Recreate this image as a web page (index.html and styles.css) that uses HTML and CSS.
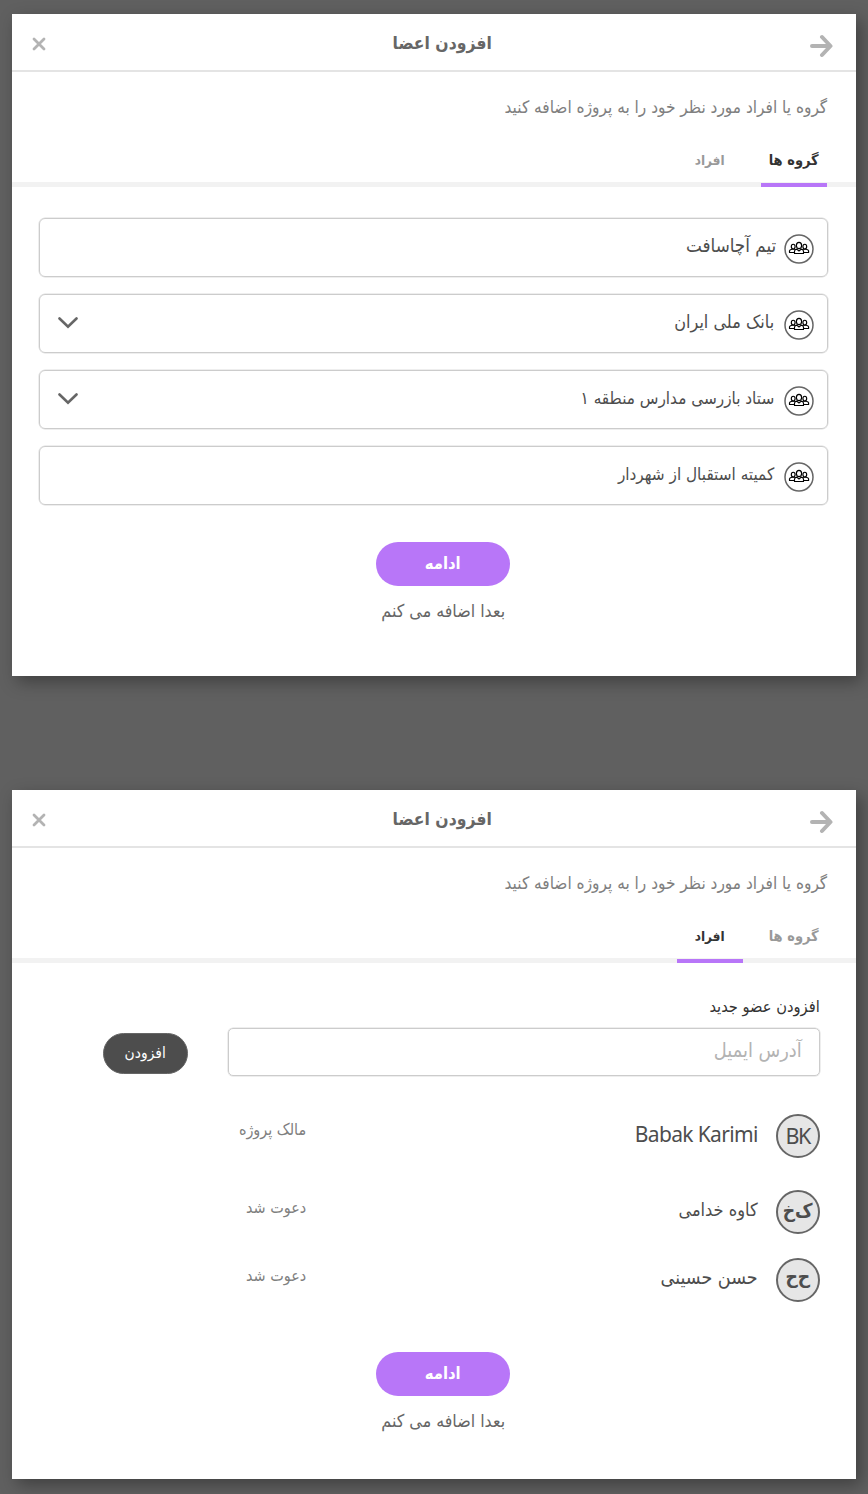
FILE: index.html
```html
<!DOCTYPE html>
<html lang="fa" dir="rtl">
<head>
<meta charset="utf-8">
<title>افزودن اعضا</title>
<link rel="stylesheet" href="styles.css">
</head>
<body>
<svg class="defs" width="0" height="0">
  <symbol id="arrow" viewBox="0 0 24 24"><path d="M3 12H20.500M13 3L21.500 12L13 21" fill="none" stroke="currentColor" stroke-width="4" stroke-linecap="round" stroke-linejoin="round"/></symbol>
  <symbol id="close" viewBox="0 0 14 14"><path d="M2 2l10 10M12 2L2 12" fill="none" stroke="currentColor" stroke-width="2.800" stroke-linecap="round"/></symbol>
  <symbol id="chevron" viewBox="0 0 20 12"><path d="M1.500 1.500L10 9.800l8.500-8.300" fill="none" stroke="currentColor" stroke-width="2.600" stroke-linecap="round"/></symbol>
  <symbol id="group" viewBox="0 0 30 30">
    <circle cx="15" cy="15" r="14" fill="#fff" stroke="#666" stroke-width="1.500"/>
    <g fill="#fff" stroke="#000" stroke-width="1.150" stroke-linejoin="round">
      <path d="M5.500 18.500v-1.700q.2-1.100 2.400-1.600h2.700q2 .5 2.300 1.600v1.700z"/>
      <path d="M17.100 18.500v-1.700q.3-1.100 2.400-1.600h2.700q2.200.5 2.400 1.600v1.700z"/>
      <ellipse cx="9.200" cy="12.600" rx="1.900" ry="2.400"/>
      <ellipse cx="20.800" cy="12.600" rx="1.900" ry="2.400"/>
      <path d="M10.500 19.500v-2.500q.2-1.300 2.200-1.900l2.300 1.900 2.300-1.900q2 .6 2.200 1.900v2.500z"/>
      <ellipse cx="15" cy="11.500" rx="2.600" ry="3.100"/>
    </g>
  </symbol>
</svg>

<section class="panel groups">
  <header class="head">
    <svg class="arrow"><use href="#arrow"/></svg>
    <h1 class="title">افزودن اعضا</h1>
    <svg class="close"><use href="#close"/></svg>
  </header>
  <p class="intro">گروه یا افراد مورد نظر خود را به پروژه اضافه کنید</p>
  <nav class="tabs">
    <a class="tab wide active"><span>گروه ها</span></a>
    <a class="tab"><span>افراد</span></a>
  </nav>
  <ul class="list">
    <li class="row first"><svg class="badge"><use href="#group"/></svg><span class="name large">تیم آچاسافت</span></li>
    <li class="row"><svg class="badge"><use href="#group"/></svg><span class="name medium">بانک ملی ایران</span><svg class="chevron"><use href="#chevron"/></svg></li>
    <li class="row"><svg class="badge"><use href="#group"/></svg><span class="name">ستاد بازرسی مدارس منطقه ۱</span><svg class="chevron"><use href="#chevron"/></svg></li>
    <li class="row"><svg class="badge"><use href="#group"/></svg><span class="name">کمیته استقبال از شهردار</span></li>
  </ul>
  <footer class="foot">
    <button class="next">ادامه</button>
    <a class="later">بعدا اضافه می کنم</a>
  </footer>
</section>

<section class="panel people">
  <header class="head">
    <svg class="arrow"><use href="#arrow"/></svg>
    <h1 class="title">افزودن اعضا</h1>
    <svg class="close"><use href="#close"/></svg>
  </header>
  <p class="intro">گروه یا افراد مورد نظر خود را به پروژه اضافه کنید</p>
  <nav class="tabs">
    <a class="tab wide"><span>گروه ها</span></a>
    <a class="tab active"><span>افراد</span></a>
  </nav>
  <div class="invite">
    <label class="label">افزودن عضو جدید</label>
    <div class="controls">
      <div class="field"><span>آدرس ایمیل</span></div>
      <button class="add">افزودن</button>
    </div>
  </div>
  <ul class="members">
    <li class="member owner"><span class="avatar latin">BK</span><span class="who latin" dir="ltr">Babak Karimi</span><span class="role">مالک پروژه</span></li>
    <li class="member"><span class="avatar">ک‌خ</span><span class="who">کاوه خدامی</span><span class="role">دعوت شد</span></li>
    <li class="member"><span class="avatar raised">ح‌ح</span><span class="who large">حسن حسینی</span><span class="role">دعوت شد</span></li>
  </ul>
  <footer class="foot">
    <button class="next">ادامه</button>
    <a class="later">بعدا اضافه می کنم</a>
  </footer>
</section>
</body>
</html>
```
FILE: styles.css
```css
* { box-sizing: border-box; }
body {
  margin: 0;
  height: 1494px;
  padding: 13.500px 12.300px 0 11.700px;
  background: #606060;
  font-family: "DejaVu Sans Condensed", "DejaVu Sans", sans-serif;
  font-stretch: condensed;
  color: #4d4d4d;
  overflow: hidden;
}
h1, p, ul { margin: 0; padding: 0; list-style: none; font-weight: normal; }
button { border: 0; padding: 0; font-family: inherit; font-stretch: inherit; }
svg { display: block; flex: none; }
.defs { position: absolute; }
.panel {
  background: #fff;
  box-shadow: 5px 6px 16px rgba(0, 0, 0, .34);
  display: flex;
  flex-direction: column;
}
.groups { height: 662.500px; margin-bottom: 113.500px; }
.people { height: 689.500px; }

.head {
  height: 58px;
  flex: none;
  display: grid;
  grid-template-columns: 46px 1fr 63px;
  align-items: center;
  border-bottom: 2px solid #e4e4e4;
}
.arrow { width: 24px; height: 24px; margin: 8px 22.500px 0 0; color: #b3b3b3; }
.close { width: 14px; height: 14px; justify-self: end; margin: 5px 0 0 20px; color: #b3b3b3; }
.title { margin-top: 3px; font-size: 17.400px; font-weight: bold; color: #666; text-align: center; line-height: 30px; white-space: nowrap; }
.intro { height: 69px; padding: 20px 28.500px 0 0; font-size: 17.100px; line-height: 30px; color: #808080; white-space: nowrap; }

.tabs { height: 46px; flex: none; display: flex; gap: 18px; padding-right: 29px; border-bottom: 5px solid #f2f2f2; }
.tab { width: 66px; height: 46px; display: flex; justify-content: center; font-size: 13.500px; font-weight: bold; line-height: 38px; color: #999; white-space: nowrap; border-bottom: 4px solid transparent; }
.tab.wide { font-size: 14.500px; }
.tab.active { color: #333; border-bottom-color: #b876f8; }

.list { display: flex; flex-direction: column; gap: 16.500px; padding: 31px 27.500px 0 27px; }
.row { height: 59.500px; display: flex; align-items: center; padding: 0 13px 0 18px; border: 1.500px solid #ccc; border-radius: 6px; box-shadow: 0 0 0 .5px #ddd; }
.badge { width: 30px; height: 30px; margin: 4px 0 0 10px; }
.first .badge { margin-left: 8px; }
.name { font-size: 17px; line-height: 30px; margin-top: -3px; white-space: nowrap; }
.name.medium { font-size: 17.900px; }
.name.large { font-size: 18.700px; }
.chevron { width: 20px; height: 12px; margin: 0 auto 0 0; color: #666; }

.foot { display: flex; flex-direction: column; align-items: center; padding: 37px 0 0 0; margin-left: 18px; }
.next { width: 134px; height: 44px; border-radius: 22px; background: #b876f8; color: #fff; font-size: 16.500px; font-weight: bold; line-height: 42px; }
.later { font-size: 17.700px; line-height: 30px; margin-top: 10px; padding-left: 1px; color: #666; white-space: nowrap; }

.invite { padding: 30px 36px 0 91px; }
.label { display: block; font-size: 16.300px; line-height: 28px; color: #333; }
.controls { display: flex; justify-content: space-between; align-items: center; margin-top: 7px; }
.field { width: 592px; height: 48.500px; border: 1.500px solid #ccc; border-radius: 5px; padding: 0 17px; font-size: 19.800px; line-height: 43px; color: #b3b3b3; box-shadow: 0 0 0 .5px #ddd; }
.add { width: 85px; height: 41.500px; margin-top: 3px; border: 1.500px solid #666; border-radius: 21px; background: #4d4d4d; color: #fff; font-size: 15.400px; line-height: 37px; }

.members { padding: 38px 36px 0 0; }
.member { display: grid; grid-template-columns: 44px 451px 120px; column-gap: 18px; height: 68px; }
.owner { height: 76px; }
.avatar { width: 44px; height: 44px; border: 2.500px solid #666; border-radius: 50%; background: #e6e6e6; font-size: 19px; font-weight: bold; line-height: 37px; text-align: center; }
.raised { line-height: 33px; }
.who { font-size: 18px; line-height: 40px; text-align: right; white-space: nowrap; }
.who.large { font-size: 19.500px; }
.latin { font-family: "Noto Sans", sans-serif; font-stretch: normal; font-size: 21px; font-weight: normal; letter-spacing: -.65px; }
.who.latin { line-height: 41px; }
.avatar.latin { line-height: 39px; font-size: 21.500px; letter-spacing: -1.500px; }
.role { font-size: 16px; line-height: 36px; color: #808080; margin-right: -17.500px; white-space: nowrap; }
.owner .role { line-height: 32px; }
.people .foot { padding-top: 26px; }
```
